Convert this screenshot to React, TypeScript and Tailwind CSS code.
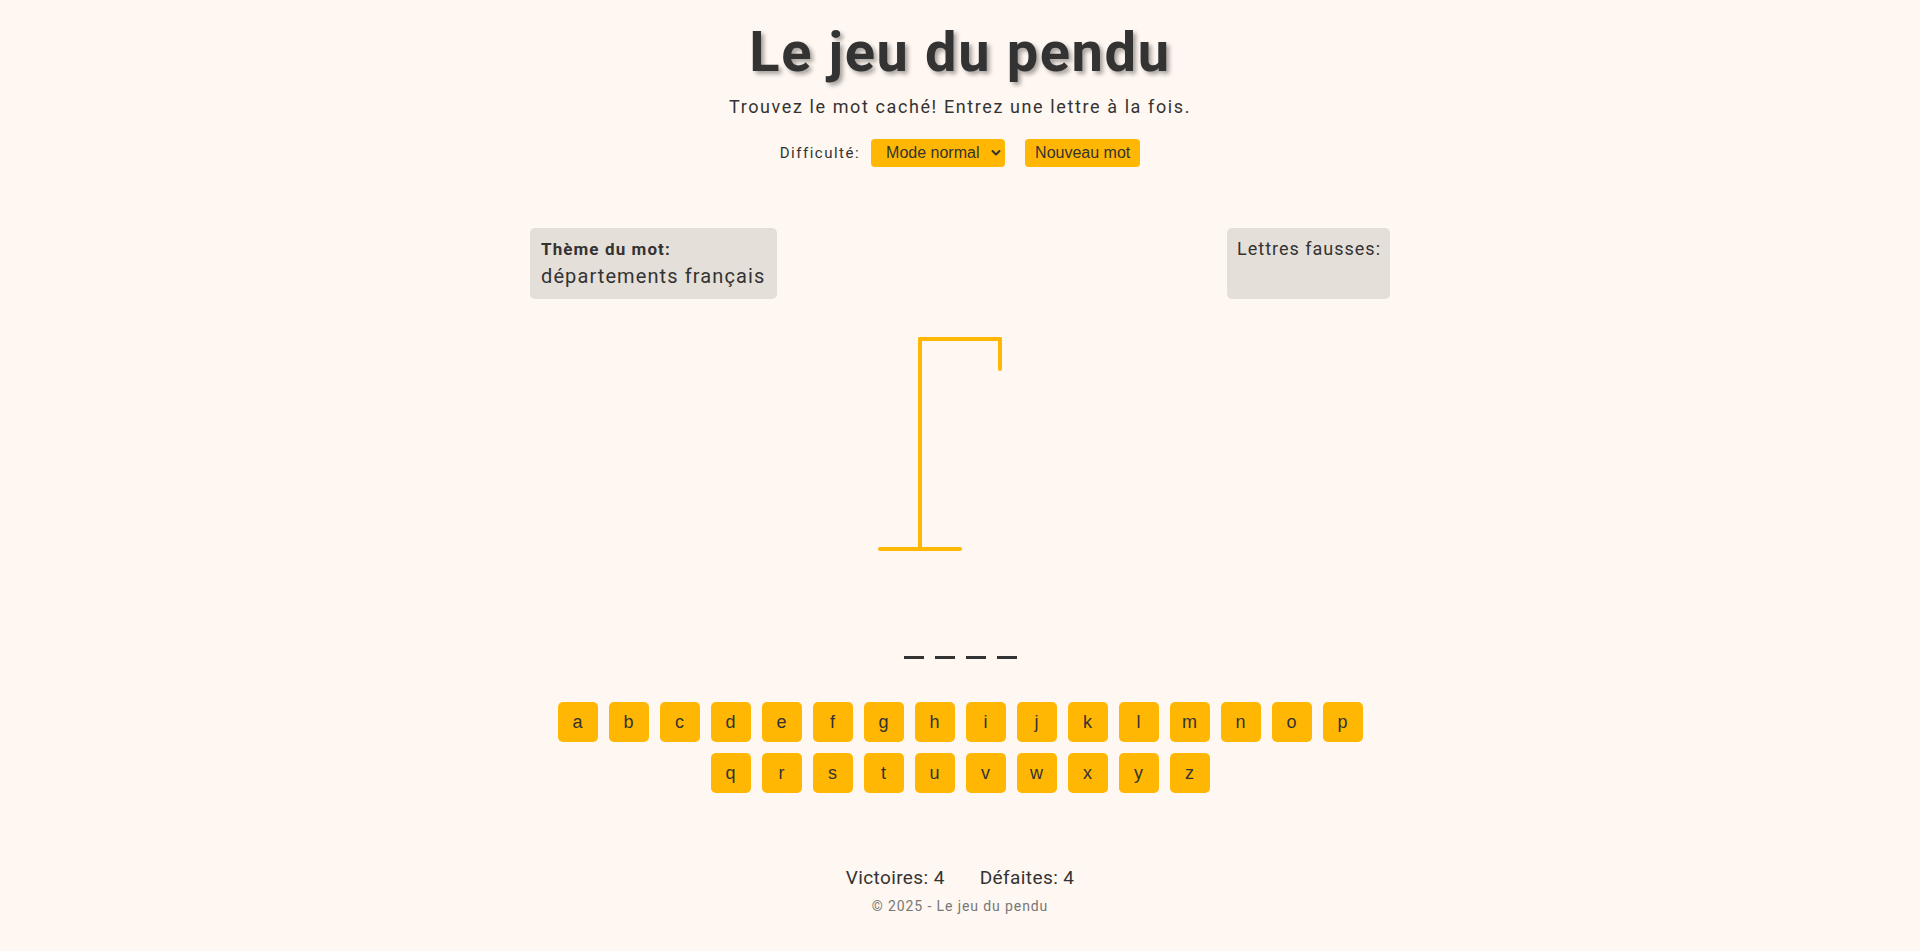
const LETTERS = 'abcdefghijklmnopqrstuvwxyz'.split('');
const WORD = ['', '', '', ''];

function Gallows() {
  return (
    <svg width="200" height="250" className="mt-[20px]" stroke="#ffb703" strokeWidth="4" strokeLinecap="round" fill="none">
      <line x1="60" y1="20" x2="140" y2="20" />
      <line x1="140" y1="20" x2="140" y2="50" />
      <line x1="60" y1="20" x2="60" y2="230" />
      <line x1="20" y1="230" x2="100" y2="230" />
    </svg>
  );
}

export default function App() {
  return (
    <div className="min-h-screen bg-[#fff7f1] text-[#333333] font-['Roboto',sans-serif] flex flex-col items-center pt-[20px]">
      {/* Header */}
      <h1 className="text-[56px] leading-[64px] font-bold tracking-[1.6px] [text-shadow:3px_3px_4px_rgba(0,0,0,0.35)]">
        Le jeu du pendu
      </h1>
      <p className="mt-[11px] text-[18px] leading-[24px] tracking-[1.6px]">
        Trouvez le mot caché! Entrez une lettre à la fois.
      </p>

      {/* Controls */}
      <div className="mt-[20px] flex items-center">
        <label className="text-[15px] tracking-[1.5px] mr-[11px]">Difficulté:</label>
        <div className="relative">
          <select className="appearance-none bg-[#ffb703] rounded-[4px] h-[28px] w-[134px] pl-[15px] text-[16px] font-['Liberation_Sans',sans-serif] text-[#333333] outline-none">
            <option>Mode normal</option>
            <option>Mode facile</option>
            <option>Mode difficile</option>
          </select>
          <svg className="absolute right-[4px] top-[10px] pointer-events-none" width="10" height="8" viewBox="0 0 10 8" fill="none" stroke="#333" strokeWidth="2" strokeLinecap="round" strokeLinejoin="round">
            <path d="M1.5 2 L5 5.5 L8.5 2" />
          </svg>
        </div>
        <button className="ml-[20px] bg-[#ffb703] rounded-[4px] h-[28px] px-[10px] text-[16px] font-['Liberation_Sans',sans-serif] text-[#333333]">
          Nouveau mot
        </button>
      </div>

      {/* Info boxes */}
      <div className="mt-[61px] w-[860px] flex justify-between">
        <div className="bg-[#e5dfd9] rounded-[5px] pt-[9px] pb-[8px] px-[11px] w-[247px] whitespace-nowrap">
          <p className="text-[17px] leading-[24px] font-bold tracking-[1.1px]">Thème du mot:</p>
          <p className="text-[20px] leading-[30px] tracking-[1.1px]">départements français</p>
        </div>
        <div className="bg-[#e5dfd9] rounded-[5px] pt-[9px] px-[10px] w-[163px] whitespace-nowrap">
          <p className="text-[18px] leading-[24px] tracking-[1px]">Lettres fausses:</p>
        </div>
      </div>

      <Gallows />

      {/* Word */}
      <div className="mt-[37px] flex gap-[11px]">
        {WORD.map((l, i) => (
          <span key={i} className="w-[20px] h-[53px] border-b-[3px] border-[#333333] flex items-center justify-center text-[30px]">
            {l}
          </span>
        ))}
      </div>

      {/* Keyboard */}
      <div className="mt-[43px] max-w-[820px] flex flex-wrap justify-center gap-[11px]">
        {LETTERS.map(l => (
          <button key={l} className="w-[40px] h-[40px] bg-[#ffb703] rounded-[5px] text-[18px] font-['Liberation_Sans',sans-serif] text-[#333333]">
            {l}
          </button>
        ))}
      </div>

      {/* Stats */}
      <div className="mt-[73px] flex gap-[35px] text-[19px] leading-[24px] tracking-[0.4px]">
        <span>Victoires: 4</span>
        <span>Défaites: 4</span>
      </div>
      <p className="mt-[6px] text-[14px] leading-[20px] tracking-[0.9px] text-[#777777]">© 2025 - Le jeu du pendu</p>
    </div>
  );
}
